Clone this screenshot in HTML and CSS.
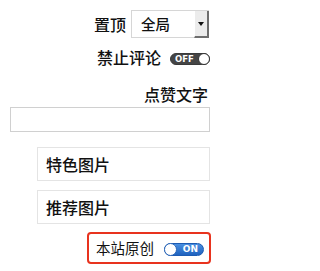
FILE: index.html
```html
<!DOCTYPE html>
<html>
<head>
<meta charset="utf-8">
<link rel="stylesheet" href="styles.css">
</head>
<body>
<div class="panel">
  <div class="row row-top">
    <span class="label">置顶</span>
    <div class="select">
      <span class="select-text">全局</span>
      <span class="select-btn"><span class="arrow"></span></span>
    </div>
  </div>
  <div class="row row-comment">
    <span class="label">禁止评论</span>
    <span class="toggle off"><span class="toggle-text">OFF</span><span class="knob"></span></span>
  </div>
  <div class="row row-like">
    <span class="label">点赞文字</span>
  </div>
  <div class="input"></div>
  <div class="box box-first">特色图片</div>
  <div class="box box-second">推荐图片</div>
  <div class="original">
    <span class="label light">本站原创</span>
    <span class="toggle on"><span class="knob"></span><span class="toggle-text">ON</span></span>
  </div>
</div>
</body>
</html>
```
FILE: styles.css
```css
html, body {
  margin: 0;
  padding: 0;
  background: #fff;
}
body {
  font-family: "Noto Sans CJK SC", "Noto Sans", sans-serif;
  color: #222;
}
.panel {
  width: 219px;
  display: flex;
  flex-direction: column;
  align-items: flex-end;
  padding: 10px 9px 0 0;
  box-sizing: border-box;
}
.row {
  display: flex;
  align-items: center;
}
.label {
  font-size: 16px;
  line-height: 18px;
  font-weight: 500;
  color: #111;
}
.label.light {
  font-size: 14.5px;
  font-weight: 400;
}
.row-top .label {
  margin-right: 5px;
}
.select {
  width: 78px;
  height: 28px;
  box-sizing: border-box;
  border: 1px solid #d6d6d6;
  border-right: none;
  display: flex;
  align-items: stretch;
  margin-right: 1px;
}
.select-text {
  flex: 1;
  font-size: 14.5px;
  line-height: 26px;
  padding-left: 9px;
  font-weight: 500;
  color: #111;
}
.select-btn {
  width: 12px;
  background: #ececec;
  border-right: 2px solid #6e6e6e;
  border-bottom: 2px solid #6e6e6e;
  border-left: 1px solid #fff;
  display: flex;
  align-items: center;
  justify-content: center;
  margin-bottom: -1px;
}
.arrow {
  width: 0;
  height: 0;
  border-left: 3px solid transparent;
  border-right: 3px solid transparent;
  border-top: 4px solid #111;
}
.row-comment {
  margin-top: 10px;
}
.row-comment .label {
  margin-right: 9px;
}
.toggle {
  width: 40px;
  height: 12px;
  border-radius: 7px;
  box-sizing: border-box;
  display: flex;
  align-items: center;
  font-family: "DejaVu Sans", sans-serif;
  font-weight: bold;
  color: #fff;
}
.toggle.off {
  background: #454545;
  justify-content: space-between;
  padding-left: 4px;
  border: 1px solid #3a3a3a;
  margin-top: 3px;
}
.toggle.off .toggle-text {
  font-size: 8.5px;
  line-height: 10px;
}
.toggle.off .knob {
  width: 12px;
  height: 12px;
  margin-right: -1px;
  border-radius: 50%;
  background: #fff;
  box-sizing: border-box;
  border: 1px solid #333;
}
.row-like {
  margin-top: 19px;
  margin-right: 2px;
}
.input {
  width: 200px;
  height: 25px;
  box-sizing: border-box;
  border: 1px solid #d0d0d0;
  margin-top: 4px;
}
.box {
  width: 173px;
  height: 34px;
  box-sizing: border-box;
  border: 1px solid #e4e4e4;
  font-size: 16px;
  font-weight: 500;
  line-height: 32px;
  padding-left: 8px;
  color: #111;
}
.box-first {
  margin-top: 15px;
}
.box-second {
  margin-top: 9px;
}
.original {
  margin-top: 8px;
  margin-right: -1px;
  width: 124px;
  height: 32px;
  box-sizing: border-box;
  border: 2px solid #e8331e;
  border-radius: 4px;
  display: flex;
  align-items: center;
  justify-content: flex-end;
  padding-right: 5px;
}
.original .label {
  margin-right: 10px;
}
.toggle.on {
  height: 13px;
  background: linear-gradient(#4a8fe0, #1f62bf);
  border: 1px solid #1c5bb3;
  justify-content: space-between;
  padding-right: 5px;
  margin-top: 2px;
}
.toggle.on .toggle-text {
  font-size: 9px;
  line-height: 11px;
}
.toggle.on .knob {
  width: 13px;
  height: 13px;
  margin-left: -1px;
  border-radius: 50%;
  background: #fff;
  box-sizing: border-box;
  border: 1px solid #2a66b8;
}
```
